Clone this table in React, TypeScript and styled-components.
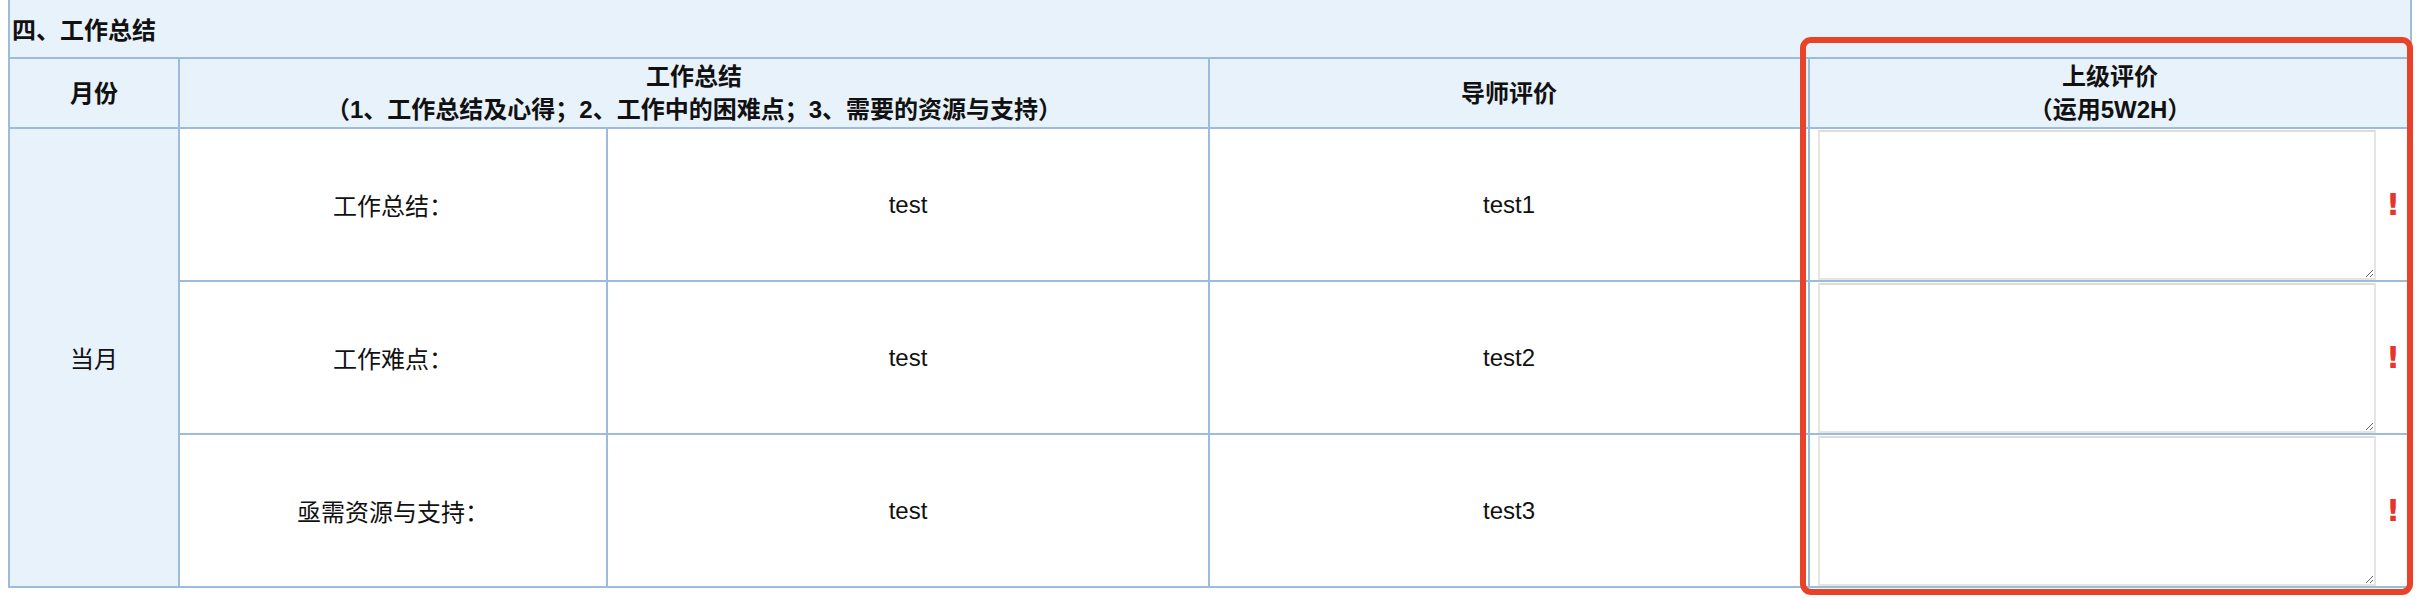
import styled, {createGlobalStyle} from "styled-components";

const GlobalStyle = createGlobalStyle`
    html, body {
        margin: 0;
        padding: 0;
        background: #FFFFFF;
    }

    body {
        font-family: "Liberation Sans", "Noto Sans CJK SC", sans-serif;
        color: #111111;
    }
`

const BORDER = '#9DBCDB'
const HEAD_BG = '#E8F2FB'

const Page = styled.div`
    position: relative;
    padding: 0 0 0 8px;
    width: 2428px;
    height: 598px;
    box-sizing: border-box;
    overflow: hidden;
`

const Table = styled.table`
    border-collapse: collapse;
    table-layout: fixed;
    width: 2402px;
    font-size: 24px;

    td, th {
        border: 2px solid ${BORDER};
        padding: 0;
    }
`

const TitleCell = styled.th`
    background: ${HEAD_BG};
    height: 57px;
    text-align: left;
    font-weight: 700;
    padding-left: 2px !important;
    border-top: none !important;
`

const HeadCell = styled.th`
    background: ${HEAD_BG};
    height: 68px;
    font-weight: 700;
    line-height: 33px;
    text-align: center;
`

const MonthCell = styled.td<{ $tinted?: boolean }>`
    background: ${p => p.$tinted ? HEAD_BG : '#FFFFFF'};
    text-align: center;
    vertical-align: middle;
`

const BodyCell = styled.td`
    height: 151px;
    text-align: center;
    vertical-align: middle;
`

const InputCell = styled.td`
    height: 151px;
    vertical-align: top;
`

const InputRow = styled.div`
    display: flex;
    align-items: center;
    padding: 0 0 0 8px;
    height: 151px;
`

const Comment = styled.textarea`
    box-sizing: border-box;
    display: block;
    width: 558px;
    height: 150px;
    margin: 0;
    border: 2px solid #E5E5E2;
    border-top-color: #DCDCD8;
    border-radius: 0;
    background: #FFFFFF;
    resize: both;
    outline: none;
    font: inherit;
`

const Required = styled.span`
    flex: 1;
    text-align: center;
    font-family: "DejaVu Sans", sans-serif;
    font-weight: 700;
    font-size: 31px;
    line-height: 1;
    color: #E8352B;
`

const Highlight = styled.div`
    position: absolute;
    left: 1800px;
    top: 37px;
    width: 613px;
    height: 558px;
    box-sizing: border-box;
    border: 6px solid #EA4229;
    border-radius: 11px;
    pointer-events: none;
`

const rows = [
    {label: '工作总结：', summary: 'test', mentor: 'test1'},
    {label: '工作难点：', summary: 'test', mentor: 'test2'},
    {label: '亟需资源与支持：', summary: 'test', mentor: 'test3'},
]

export default function App() {
    return (
        <>
            <GlobalStyle/>
            <Page>
                <Table>
                    <colgroup>
                        <col style={{width: 170}}/>
                        <col style={{width: 428}}/>
                        <col style={{width: 602}}/>
                        <col style={{width: 600}}/>
                        <col style={{width: 602}}/>
                    </colgroup>
                    <thead>
                    <tr>
                        <TitleCell colSpan={5}>四、工作总结</TitleCell>
                    </tr>
                    <tr>
                        <HeadCell>月份</HeadCell>
                        <HeadCell colSpan={2}>
                            工作总结<br/>（1、工作总结及心得；2、工作中的困难点；3、需要的资源与支持）
                        </HeadCell>
                        <HeadCell>导师评价</HeadCell>
                        <HeadCell>上级评价<br/>（运用5W2H）</HeadCell>
                    </tr>
                    </thead>
                    <tbody>
                    {rows.map((r, i) =>
                        <tr key={r.mentor}>
                            {i === 0 && <MonthCell $tinted rowSpan={3}>当月</MonthCell>}
                            <BodyCell>{r.label}</BodyCell>
                            <BodyCell>{r.summary}</BodyCell>
                            <BodyCell>{r.mentor}</BodyCell>
                            <InputCell>
                                <InputRow>
                                    <Comment/>
                                    <Required>!</Required>
                                </InputRow>
                            </InputCell>
                        </tr>
                    )}
                    </tbody>
                </Table>
                <Highlight/>
            </Page>
        </>
    )
}
